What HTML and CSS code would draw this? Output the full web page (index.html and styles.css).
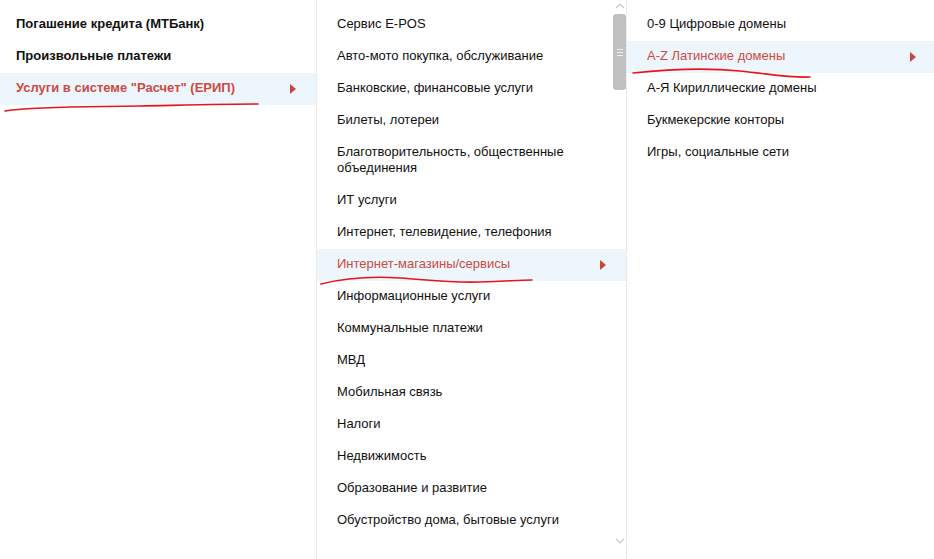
FILE: index.html
```html
<!DOCTYPE html>
<html lang="ru">
<head>
<meta charset="utf-8">
<title>Меню</title>
<link rel="stylesheet" href="styles.css">
</head>
<body>
<div class="menu">
  <ul class="col col-1">
    <li class="item">Погашение кредита (МТБанк)</li>
    <li class="item">Произвольные платежи</li>
    <li class="item active">Услуги в системе "Расчет" (ЕРИП)<span class="arrow"></span></li>
  </ul>
  <div class="col col-2">
    <ul class="list">
      <li class="item">Сервис E-POS</li>
      <li class="item">Авто-мото покупка, обслуживание</li>
      <li class="item">Банковские, финансовые услуги</li>
      <li class="item">Билеты, лотереи</li>
      <li class="item">Благотворительность, общественные объединения</li>
      <li class="item">ИТ услуги</li>
      <li class="item">Интернет, телевидение, телефония</li>
      <li class="item active">Интернет-магазины/сервисы<span class="arrow"></span></li>
      <li class="item">Информационные услуги</li>
      <li class="item">Коммунальные платежи</li>
      <li class="item">МВД</li>
      <li class="item">Мобильная связь</li>
      <li class="item">Налоги</li>
      <li class="item">Недвижимость</li>
      <li class="item">Образование и развитие</li>
      <li class="item">Обустройство дома, бытовые услуги</li>
    </ul>
    <div class="scrollbar">
      <svg class="sb-up" width="10" height="6" viewBox="0 0 10 6"><path d="M1 5 L5 1 L9 5" fill="none" stroke="#c8c8c8" stroke-width="1.2"/></svg>
      <div class="thumb"><span></span><span></span><span></span></div>
      <svg class="sb-down" width="10" height="6" viewBox="0 0 10 6"><path d="M1 1 L5 5 L9 1" fill="none" stroke="#c8c8c8" stroke-width="1.2"/></svg>
    </div>
  </div>
  <ul class="col col-3">
    <li class="item">0-9 Цифровые домены</li>
    <li class="item active">A-Z Латинские домены<span class="arrow"></span></li>
    <li class="item">А-Я Кириллические домены</li>
    <li class="item">Букмекерские конторы</li>
    <li class="item">Игры, социальные сети</li>
  </ul>
  <svg class="marks" width="934" height="559" viewBox="0 0 934 559">
    <path d="M5 111 C 40 106, 90 107, 140 106 S 230 104, 258 104" fill="none" stroke="#e8141a" stroke-width="1.6" stroke-linecap="round"/>
    <path d="M321 284 C 345 278, 370 276, 400 278 S 450 283, 480 282 S 520 280, 532 280" fill="none" stroke="#e8141a" stroke-width="1.6" stroke-linecap="round"/>
    <path d="M633 73 C 670 69, 710 68, 740 71 S 790 78, 810 77" fill="none" stroke="#e8141a" stroke-width="1.6" stroke-linecap="round"/>
  </svg>
</div>
</body>
</html>
```

FILE: styles.css
```css
html, body {
  margin: 0;
  padding: 0;
  background: #fff;
}
body {
  font-family: "Liberation Sans", Arial, sans-serif;
  font-size: 13px;
  color: #111;
}
.menu {
  position: relative;
  display: flex;
  width: 934px;
  height: 559px;
  overflow: hidden;
}
ul {
  list-style: none;
  margin: 0;
  padding: 0;
}
.col {
  box-sizing: border-box;
  height: 559px;
  padding-top: 9px;
}
.col-1 {
  width: 317px;
  border-right: 1px solid #ebebeb;
  font-weight: bold;
}
.col-2 {
  position: relative;
  width: 310px;
  padding-top: 0;
  border-right: 1px dotted #d6d6d6;
}
.col-2 .list {
  padding-top: 9px;
}
.col-3 {
  flex: 1;
}
.item {
  position: relative;
  padding: 7px 50px 9px 16px;
  line-height: 16px;
}
.col-2 .item {
  padding-left: 20px;
}
.col-3 .item {
  padding-left: 20px;
}
.item.active {
  background: #eef6fd;
  color: #cc4a3e;
}
.arrow {
  position: absolute;
  right: 20px;
  top: 11px;
  width: 0;
  height: 0;
  border-top: 5px solid transparent;
  border-bottom: 5px solid transparent;
  border-left: 6px solid #c8473c;
}
.col-3 .arrow {
  right: 18px;
}
.scrollbar {
  position: absolute;
  top: 0;
  right: 0;
  width: 13px;
  height: 559px;
}
.sb-up {
  position: absolute;
  top: 3px;
  left: 2px;
}
.sb-down {
  position: absolute;
  top: 538px;
  left: 2px;
}
.thumb {
  position: absolute;
  top: 14px;
  left: 0;
  width: 13px;
  height: 76px;
  border-radius: 3px;
  background: #c1c1c1;
  display: flex;
  flex-direction: column;
  align-items: center;
  justify-content: center;
  gap: 2px;
}
.thumb span {
  display: block;
  width: 6px;
  height: 1px;
  background: #eeeeee;
}
.marks {
  position: absolute;
  left: 0;
  top: 0;
  pointer-events: none;
}
```
